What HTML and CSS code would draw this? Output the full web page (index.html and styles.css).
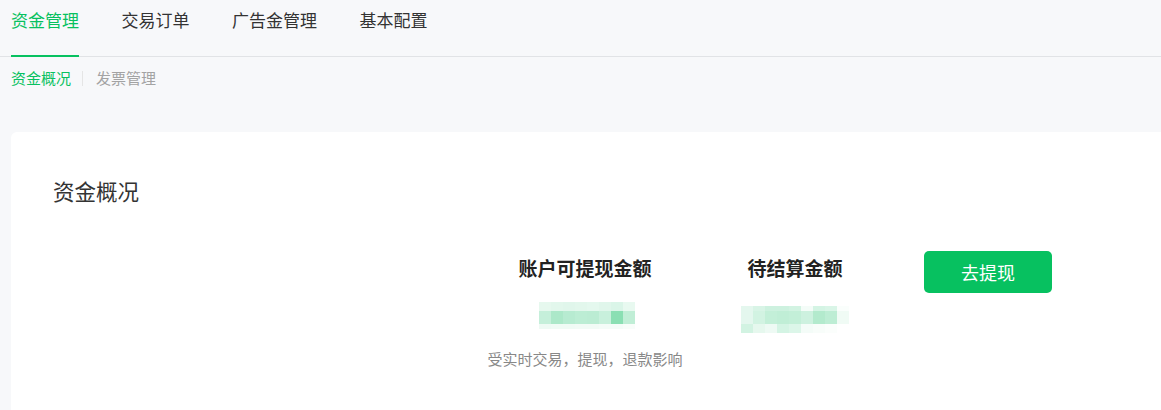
FILE: index.html
```html
<!DOCTYPE html>
<html lang="zh-CN">
<head>
<meta charset="utf-8">
<title>资金管理</title>
<link rel="stylesheet" href="styles.css">
</head>
<body>
<div class="page">
  <nav class="tabs">
    <a class="tab active">资金管理</a>
    <a class="tab">交易订单</a>
    <a class="tab">广告金管理</a>
    <a class="tab">基本配置</a>
  </nav>
  <div class="subtabs">
    <a class="subtab active">资金概况</a>
    <span class="sep"></span>
    <a class="subtab">发票管理</a>
  </div>
  <section class="card">
    <h2 class="card-title">资金概况</h2>
    <div class="stats">
      <div class="stat">
        <div class="stat-label">账户可提现金额</div>
        <div class="blur blur-a">
          <i style="background:#e6f8ee"></i><i style="background:#e2f7ec"></i><i style="background:#e0f6eb"></i><i style="background:#e2f7ec"></i><i style="background:#e4f8ee"></i><i style="background:#e0f6eb"></i><i style="background:#daf5e8"></i><i style="background:#e8f9f0"></i>
          <i style="background:#c5efda"></i><i style="background:#ace8c9"></i><i style="background:#b7ebd1"></i><i style="background:#bcedd4"></i><i style="background:#bbecd3"></i><i style="background:#c8f0dc"></i><i style="background:#8adfb3"></i><i style="background:#c0eed6"></i>
          <i style="background:#eefaf4"></i><i style="background:#f0fbf5"></i><i style="background:#f0fbf5"></i><i style="background:#f2fbf6"></i><i style="background:#f2fbf6"></i><i style="background:#f4fcf8"></i><i style="background:#f4fcf8"></i><i style="background:#f8fdfa"></i>
        </div>
        <div class="stat-note">受实时交易，提现，退款影响</div>
      </div>
      <div class="stat">
        <div class="stat-label">待结算金额</div>
        <div class="blur blur-b">
          <i style="background:#e4f7ee"></i><i style="background:#d8f4e6"></i><i style="background:#cdf1df"></i><i style="background:#cdf1df"></i><i style="background:#d2f3e2"></i><i style="background:#f4fcf8"></i><i style="background:#d4f4e4"></i><i style="background:#d9f5e7"></i><i style="background:#fafefc"></i>
          <i style="background:#e4f7ee"></i><i style="background:#d2f3e2"></i><i style="background:#c3efd8"></i><i style="background:#c0eed6"></i><i style="background:#c3efd8"></i><i style="background:#cdf1df"></i><i style="background:#b3eacd"></i><i style="background:#bdedd4"></i><i style="background:#f0fbf5"></i>
          <i style="background:#d2f3e2"></i><i style="background:#e6f8ee"></i><i style="background:#eefaf4"></i><i style="background:#d4f4e4"></i><i style="background:#dcf6e9"></i><i style="background:#f4fcf8"></i><i style="background:#f8fdfa"></i><i style="background:#fbfefc"></i><i style="background:#fff"></i>
        </div>
      </div>
      <button class="btn-withdraw">去提现</button>
    </div>
  </section>
</div>
</body>
</html>
```

FILE: styles.css
```css
* { box-sizing: border-box; }
html, body { margin: 0; padding: 0; }
body {
  background: #f7f8fa;
  font-family: "Noto Sans CJK SC", "Noto Sans", sans-serif;
  color: #333;
  overflow: hidden;
}
.page { padding: 0 0 0 11px; }

.tabs {
  display: flex;
  gap: 42.5px;
  height: 57px;
  border-bottom: 1px solid #e1e3e6;
  margin-left: -11px;
  padding-left: 11px;
}
.tab {
  font-size: 17px;
  line-height: 40px;
  height: 57px;
  margin-bottom: -1px;
  border-bottom: 2px solid transparent;
  color: #333;
  cursor: pointer;
}
.tab.active { color: #07c160; border-bottom-color: #07c160; }

.subtabs {
  display: flex;
  align-items: center;
  margin-top: 11px;
  height: 20px;
}
.subtab { font-size: 15px; line-height: 20px; color: #a3a3a3; }
.subtab.active { color: #07c160; }
.sep { width: 1px; height: 15px; background: #e5e5e5; margin: 0 13px 0 11px; }

.card {
  margin-top: 44px;
  margin-right: -30px;
  background: #fff;
  border-radius: 6px 0 0 0;
  padding: 44px 0 0 42px;
  height: 278px;
}
.card-title {
  margin: 0;
  font-size: 21.5px;
  font-weight: 400;
  line-height: 30px;
  color: #333;
}
.stats {
  display: flex;
  align-items: flex-start;
  margin-top: 49px;
  margin-left: 427px;
}
.stat { width: 210px; display: flex; flex-direction: column; align-items: center; }
.stat-label { font-size: 19px; font-weight: 700; line-height: 26px; color: #222; }
.blur { display: grid; margin-top: 21px; }
.blur i { display: block; }
.blur-a { grid-template-columns: repeat(8, 12px); grid-template-rows: 9px 13px 5px; margin-left: 3px; }
.blur-b { grid-template-columns: repeat(9, 12px); grid-template-rows: 5px 13px 9px; margin-top: 25px; }
.stat-note { margin-top: 20px; font-size: 15px; line-height: 20px; color: #888; }

.btn-withdraw {
  margin-left: 24px;
  margin-top: -4px;
  width: 128px;
  height: 42px;
  border: 0;
  border-radius: 5px;
  background: #07c160;
  color: #fff;
  font-family: inherit;
  font-size: 18px;
  cursor: pointer;
}
```
